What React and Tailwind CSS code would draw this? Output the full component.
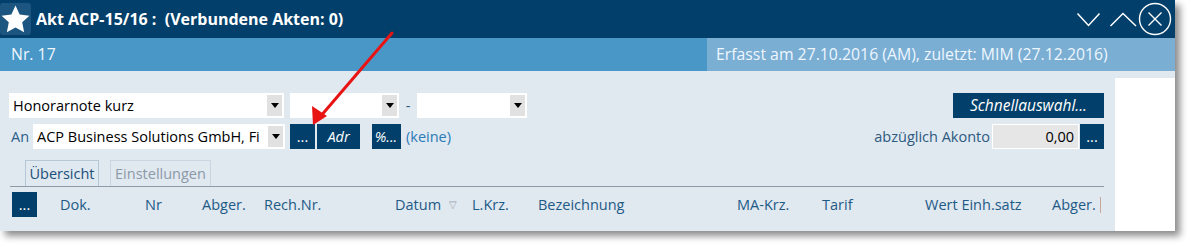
const font = { fontFamily: '"Open Sans", "Liberation Sans", sans-serif' };

const Select = ({ width, text }) => (
  <div className={`${width} h-[25px] bg-white flex items-center justify-between pl-[4px] pr-[2px]`}>
    <span className="text-[14.5px] text-black truncate">{text}</span>
    <span className="w-[15px] h-[21px] bg-[#e1e1e1] flex items-center justify-center shrink-0">
      <span className="w-0 h-0 border-l-[4px] border-r-[4px] border-t-[5px] border-l-transparent border-r-transparent border-t-black" />
    </span>
  </div>
);

const NavBtn = ({ width, children, italic }) => (
  <div className={`${width} h-[25px] bg-[#023f6a] text-white text-[14.5px] flex items-center justify-center ${italic ? "italic" : ""}`}>
    {children}
  </div>
);

const cols = [
  ["Dok.", "w-[85px]"],
  ["Nr", "w-[57px]"],
  ["Abger.", "w-[62px]"],
  ["Rech.Nr.", "w-[131px]"],
];

export default function App() {
  return (
    <div className="w-[1191px] h-[247px] bg-white" style={font}>
      <div className="w-[1175px] h-[231px] flex flex-col shadow-[5px_5px_7px_rgba(0,0,0,0.45)]">
        {/* Title bar */}
        <div className="h-[38px] bg-[#023f6a] flex items-center pr-[3px]">
          <div className="w-[31px] h-[32px] rounded-[3px] bg-[#1b5580] flex items-center justify-center">
            <svg width="31" height="31" viewBox="0 0 24 24">
              <path d="M12 1.2l3.2 6.9 7.6.9-5.6 5.2 1.5 7.6L12 18.1l-6.7 3.7 1.5-7.6L1.2 9l7.6-.9z" fill="white" />
            </svg>
          </div>
          <span className="ml-[5px] text-white font-bold text-[16px] whitespace-pre">Akt ACP-15/16 :  (Verbundene Akten: 0)</span>
          <div className="ml-auto flex items-center text-white">
            <svg width="26" height="16" viewBox="0 0 26 16" className="mt-[2px]">
              <polyline points="1.5,1.5 12.5,13.5 23.5,1.5" fill="none" stroke="white" strokeWidth="1.5" />
            </svg>
            <svg width="29" height="16" viewBox="0 0 29 16" className="ml-[7px] mt-[2px]">
              <polyline points="1.5,14 14,1.5 27,14" fill="none" stroke="white" strokeWidth="1.5" />
            </svg>
            <svg width="34" height="34" viewBox="0 0 34 34">
              <circle cx="17" cy="17" r="15.5" fill="none" stroke="white" strokeWidth="1.4" />
              <path d="M10.5 10.5l13 13M23.5 10.5l-13 13" stroke="white" strokeWidth="1.4" />
            </svg>
          </div>
        </div>
        {/* Info bar */}
        <div className="h-[33px] flex text-[15.8px] text-[#eef6ff]">
          <div className="w-[707px] bg-[#4997c6] flex items-center pl-[11px]">Nr. 17</div>
          <div className="flex-1 bg-[#7aaed3] flex items-center pl-[9px]">Erfasst am 27.10.2016 (AM), zuletzt: MIM (27.12.2016)</div>
        </div>
        {/* Body */}
        <div className="flex-1 flex">
          <div className="w-[1115px] bg-[#e0e8f0] flex flex-col pt-[22px] pr-[11px]">
            <div className="flex items-center pl-[9px]">
              <Select width="w-[275px]" text="Honorarnote kurz" />
              <div className="ml-[6px]"><Select width="w-[109px]" text="" /></div>
              <span className="w-[18px] text-center text-[14.5px] text-[#2c5a80]">-</span>
              <Select width="w-[110px]" text="" />
              <div className="ml-auto"><NavBtn width="w-[151px] text-[15.5px]" italic>Schnellauswahl...</NavBtn></div>
            </div>
            <div className="flex items-center mt-[6px] pl-[11px]">
              <span className="w-[22px] text-[14.5px] text-[#2b5f8a]">An</span>
              <Select width="w-[252px]" text="ACP Business Solutions GmbH, Fi" />
              <div className="ml-[5px]"><NavBtn width="w-[25px]">...</NavBtn></div>
              <div className="ml-[2px]"><NavBtn width="w-[43px]" italic>Adr</NavBtn></div>
              <div className="ml-[12px]"><NavBtn width="w-[28px]" italic>%...</NavBtn></div>
              <span className="w-px h-[25px] bg-[#023f6a]" />
              <span className="ml-[5px] text-[14.5px] text-[#2a7bb7]">(keine)</span>
              <span className="ml-auto text-[14.5px] text-[#2c5a80]">abzüglich Akonto</span>
              <div className="ml-[2px] w-[87px] h-[25px] bg-[#e6e6e6] border border-white flex items-center justify-end pr-[4px] text-[14.5px] text-black">0,00</div>
              <div className="ml-px"><NavBtn width="w-[24px]">...</NavBtn></div>
            </div>
            <div className="mt-[11px] ml-[10px] flex items-end pl-[15px] border-b border-[#8d9ba8] h-[27px]">
              <div className="w-[74px] h-[26px] border border-b-0 border-[#b5c6d5] flex items-center justify-center text-[14.5px] text-[#1c4f7a]">Übersicht</div>
              <div className="ml-[11px] w-[101px] h-[26px] border border-b-0 border-[#c9d6e1] flex items-center justify-center text-[14.5px] text-[#8c9aa7]">Einstellungen</div>
            </div>
            <div className="flex items-center mt-[5px] pl-[12px] text-[14.5px] text-[#1e5a86]">
              <NavBtn width="w-[25px]">...</NavBtn>
              <div className="ml-[23px] flex items-center">
                {cols.map(([t, w]) => (
                  <span key={t} className={w}>{t}</span>
                ))}
                <span className="w-[54px]">Datum</span>
                <span className="w-[23px] text-[10px] text-[#9aa4ad]">▽</span>
                <span className="w-[66px]">L.Krz.</span>
                <span className="w-[199px]">Bezeichnung</span>
                <span className="w-[85px]">MA-Krz.</span>
                <span className="w-[103px]">Tarif</span>
                <span className="w-[127px]">Wert Einh.satz</span>
                <span>Abger.</span>
                <span className="ml-[4px] w-px h-[16px] bg-[#c8a89a]" />
              </div>
            </div>
          </div>
          <div className="flex-1 flex flex-col">
            <div className="h-[7px] bg-[#e0e8f0]" />
            <div className="flex-1 bg-white" />
          </div>
        </div>
      </div>
      {/* Red annotation arrow */}
      <svg className="absolute left-0 top-0 pointer-events-none" width="1191" height="247">
        <line x1="392" y1="33" x2="320" y2="117" stroke="#e81414" strokeWidth="3" strokeLinecap="round" />
        <polygon points="313,125 312,106 327,116" fill="#e81414" />
      </svg>
    </div>
  );
}
